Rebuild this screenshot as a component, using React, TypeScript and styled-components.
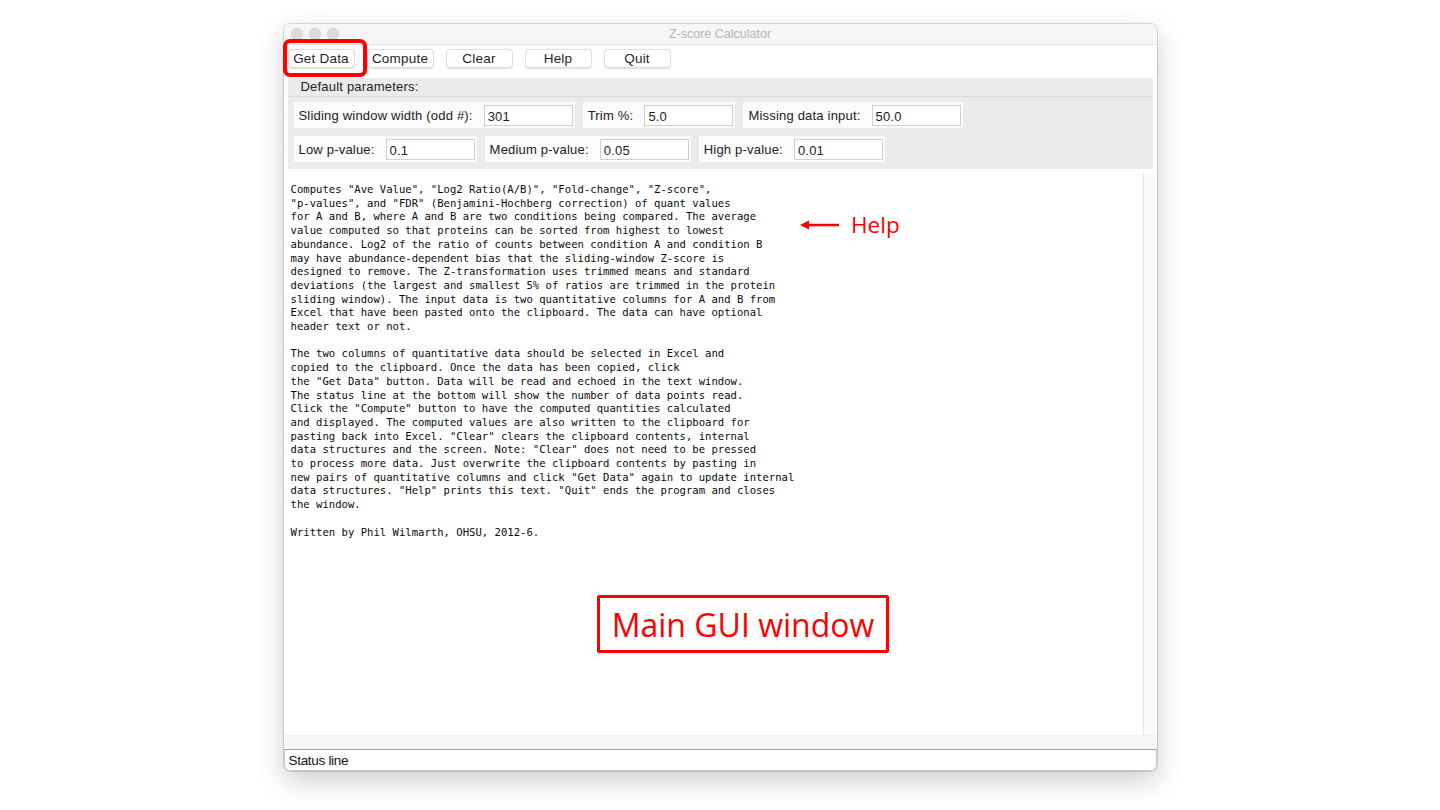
import styled, { createGlobalStyle } from "styled-components";

const GlobalStyle = createGlobalStyle`
  html, body {
    margin: 0;
    padding: 0;
    background: #ffffff;
  }
  body {
    font-family: "Liberation Sans", Arial, sans-serif;
  }
`;

const helpText = `Computes "Ave Value", "Log2 Ratio(A/B)", "Fold-change", "Z-score",
"p-values", and "FDR" (Benjamini-Hochberg correction) of quant values
for A and B, where A and B are two conditions being compared. The average
value computed so that proteins can be sorted from highest to lowest
abundance. Log2 of the ratio of counts between condition A and condition B
may have abundance-dependent bias that the sliding-window Z-score is
designed to remove. The Z-transformation uses trimmed means and standard
deviations (the largest and smallest 5% of ratios are trimmed in the protein
sliding window). The input data is two quantitative columns for A and B from
Excel that have been pasted onto the clipboard. The data can have optional
header text or not.

The two columns of quantitative data should be selected in Excel and
copied to the clipboard. Once the data has been copied, click
the "Get Data" button. Data will be read and echoed in the text window.
The status line at the bottom will show the number of data points read.
Click the "Compute" button to have the computed quantities calculated
and displayed. The computed values are also written to the clipboard for
pasting back into Excel. "Clear" clears the clipboard contents, internal
data structures and the screen. Note: "Clear" does not need to be pressed
to process more data. Just overwrite the clipboard contents by pasting in
new pairs of quantitative columns and click "Get Data" again to update internal
data structures. "Help" prints this text. "Quit" ends the program and closes
the window.

Written by Phil Wilmarth, OHSU, 2012-6.`;

const buttons = ["Get Data", "Compute", "Clear", "Help", "Quit"];

const rowOne = [
  { label: "Sliding window width (odd #):", value: "301" },
  { label: "Trim %:", value: "5.0" },
  { label: "Missing data input:", value: "50.0" },
];

const rowTwo = [
  { label: "Low p-value:", value: "0.1" },
  { label: "Medium p-value:", value: "0.05" },
  { label: "High p-value:", value: "0.01" },
];

export default function App() {
  return (
    <Page>
      <GlobalStyle />
      <Window>
        <TitleBar>
          <Lights>
            <Light />
            <Light />
            <Light />
          </Lights>
          <Title>Z-score Calculator</Title>
        </TitleBar>

        <Toolbar>
          {buttons.map((b) => (
            <ToolButton key={b}>{b}</ToolButton>
          ))}
        </Toolbar>

        <ParamFrame>
          <Legend>Default parameters:</Legend>
          <ParamInner>
            <ParamRow>
              {rowOne.map((p) => (
                <ParamGroup key={p.label}>
                  <ParamLabel>{p.label}</ParamLabel>
                  <ParamInput defaultValue={p.value} />
                </ParamGroup>
              ))}
            </ParamRow>
            <ParamRow>
              {rowTwo.map((p) => (
                <ParamGroup key={p.label}>
                  <ParamLabel>{p.label}</ParamLabel>
                  <ParamInput defaultValue={p.value} />
                </ParamGroup>
              ))}
            </ParamRow>
          </ParamInner>
        </ParamFrame>

        <TextRegion>
          <TextBody>{helpText}</TextBody>
          <ScrollTrack />
        </TextRegion>
        <HScroll />
        <StatusLine>
          <StatusText>Status line</StatusText>
        </StatusLine>
      </Window>

      <ButtonCallout />
      <HelpNote>
        <svg width="40" height="12" viewBox="0 0 40 12">
          <line x1="6" y1="6" x2="39" y2="6" stroke="#ff0000" strokeWidth="2.5" />
          <path d="M0 6 L9 1.5 L9 10.5 Z" fill="#ff0000" />
        </svg>
        <HelpWord>Help</HelpWord>
      </HelpNote>
      <WindowCallout>Main GUI window</WindowCallout>
    </Page>
  );
}

const Page = styled.div`
  position: relative;
  width: 1440px;
  height: 810px;
  display: flex;
  justify-content: center;
  padding-top: 24px;
  box-sizing: border-box;
  overflow: hidden;
`;

const Window = styled.div`
  width: 873px;
  height: 747px;
  display: flex;
  flex-direction: column;
  background: #ffffff;
  border-radius: 6px;
  overflow: hidden;
  box-shadow: 0 0 0 1px rgba(0, 0, 0, 0.13), 0 10px 28px rgba(0, 0, 0, 0.2);
`;

const TitleBar = styled.div`
  position: relative;
  height: 20px;
  flex-shrink: 0;
  display: flex;
  align-items: center;
  justify-content: center;
  background: #f6f6f6;
  border-bottom: 1px solid #e2e2e2;
`;

const Lights = styled.div`
  position: absolute;
  left: 7px;
  top: 4px;
  display: flex;
  gap: 6px;
`;

const Light = styled.span`
  width: 12px;
  height: 12px;
  border-radius: 50%;
  background: #dcdcdc;
  box-shadow: inset 0 0 0 0.5px #d0d0d0;
`;

const Title = styled.span`
  font-size: 12.5px;
  color: #b4b4b4;
`;

const Toolbar = styled.div`
  display: flex;
  gap: 12px;
  padding: 4px 4px 10px 4px;
`;

const ToolButton = styled.button`
  width: 67px;
  height: 19px;
  padding: 0;
  font-family: "Liberation Sans", Arial, sans-serif;
  font-size: 13.5px;
  letter-spacing: 0.2px;
  color: #1e1e1e;
  background: #ffffff;
  border: 1px solid #dedede;
  border-radius: 4px;
  box-shadow: 0 0.5px 1px rgba(0, 0, 0, 0.12);
`;

const ParamFrame = styled.div`
  margin: 0 4px;
  background: #ebebeb;
  display: flex;
  flex-direction: column;
`;

const Legend = styled.div`
  height: 18px;
  padding-left: 13px;
  font-size: 13px;
  letter-spacing: 0.2px;
  line-height: 18px;
  color: #222222;
`;

const ParamInner = styled.div`
  border-top: 1px solid #d8d8d8;
  padding: 5px 6px 7px 6px;
  display: flex;
  flex-direction: column;
  gap: 8px;
`;

const ParamRow = styled.div`
  display: flex;
  gap: 8px;
`;

const ParamGroup = styled.div`
  height: 26px;
  display: flex;
  align-items: center;
  padding: 0 2px 0 5px;
  background: #fbfbfb;
`;

const ParamLabel = styled.span`
  font-size: 13px;
  letter-spacing: 0.2px;
  color: #222222;
  margin-right: 11px;
  white-space: nowrap;
`;

const ParamInput = styled.input`
  width: 89px;
  height: 21px;
  box-sizing: border-box;
  padding: 2px 3px 0 3px;
  font-family: "Liberation Sans", Arial, sans-serif;
  font-size: 13px;
  letter-spacing: 0.2px;
  color: #1a1a1a;
  background: #ffffff;
  border: 1px solid #d0d0d0;
  outline: none;
`;

const TextRegion = styled.div`
  flex: 1;
  display: flex;
  margin-top: 4px;
  min-height: 0;
`;

const TextBody = styled.pre`
  flex: 1;
  margin: 0;
  padding: 10px 7px;
  font-family: "DejaVu Sans Mono", "Liberation Mono", monospace;
  font-size: 10.6px;
  line-height: 13.7px;
  color: #0a0a0a;
  white-space: pre;
  overflow: hidden;
`;

const ScrollTrack = styled.div`
  width: 12px;
  margin-right: 1px;
  background: #fafafa;
  border-left: 1px solid #e6e6e6;
`;

const HScroll = styled.div`
  height: 13px;
  flex-shrink: 0;
  background: #f7f7f7;
  border-top: 1px solid #f0f0f0;
`;

const StatusLine = styled.div`
  height: 20px;
  flex-shrink: 0;
  display: flex;
  align-items: center;
  padding-left: 4px;
  border-top: 1px solid #9d9d9d;
  border-left: 1px solid #c8c8c8;
  border-right: 1px solid #c8c8c8;
  border-bottom: 1px solid #c8c8c8;
  border-radius: 0 0 6px 6px;
  background: #ffffff;
`;

const StatusText = styled.span`
  font-size: 13.5px;
  letter-spacing: -0.3px;
  color: #111111;
`;

const ButtonCallout = styled.div`
  position: absolute;
  left: 283px;
  top: 39px;
  width: 84px;
  height: 38px;
  box-sizing: border-box;
  border: 4px solid #ff0000;
  border-radius: 7px;
`;

const HelpNote = styled.div`
  position: absolute;
  left: 800px;
  top: 209px;
  display: flex;
  align-items: center;
  gap: 11px;
`;

const HelpWord = styled.span`
  font-family: "Open Sans", "Noto Sans", sans-serif;
  font-size: 22.5px;
  color: #ff0000;
`;

const WindowCallout = styled.div`
  position: absolute;
  left: 597px;
  top: 595px;
  width: 292px;
  height: 58px;
  box-sizing: border-box;
  border: 3.5px solid #ff0000;
  border-radius: 2px;
  background: #ffffff;
  display: flex;
  align-items: center;
  justify-content: center;
  font-family: "Open Sans", "Noto Sans", sans-serif;
  font-size: 32px;
  color: #ff0000;
`;
